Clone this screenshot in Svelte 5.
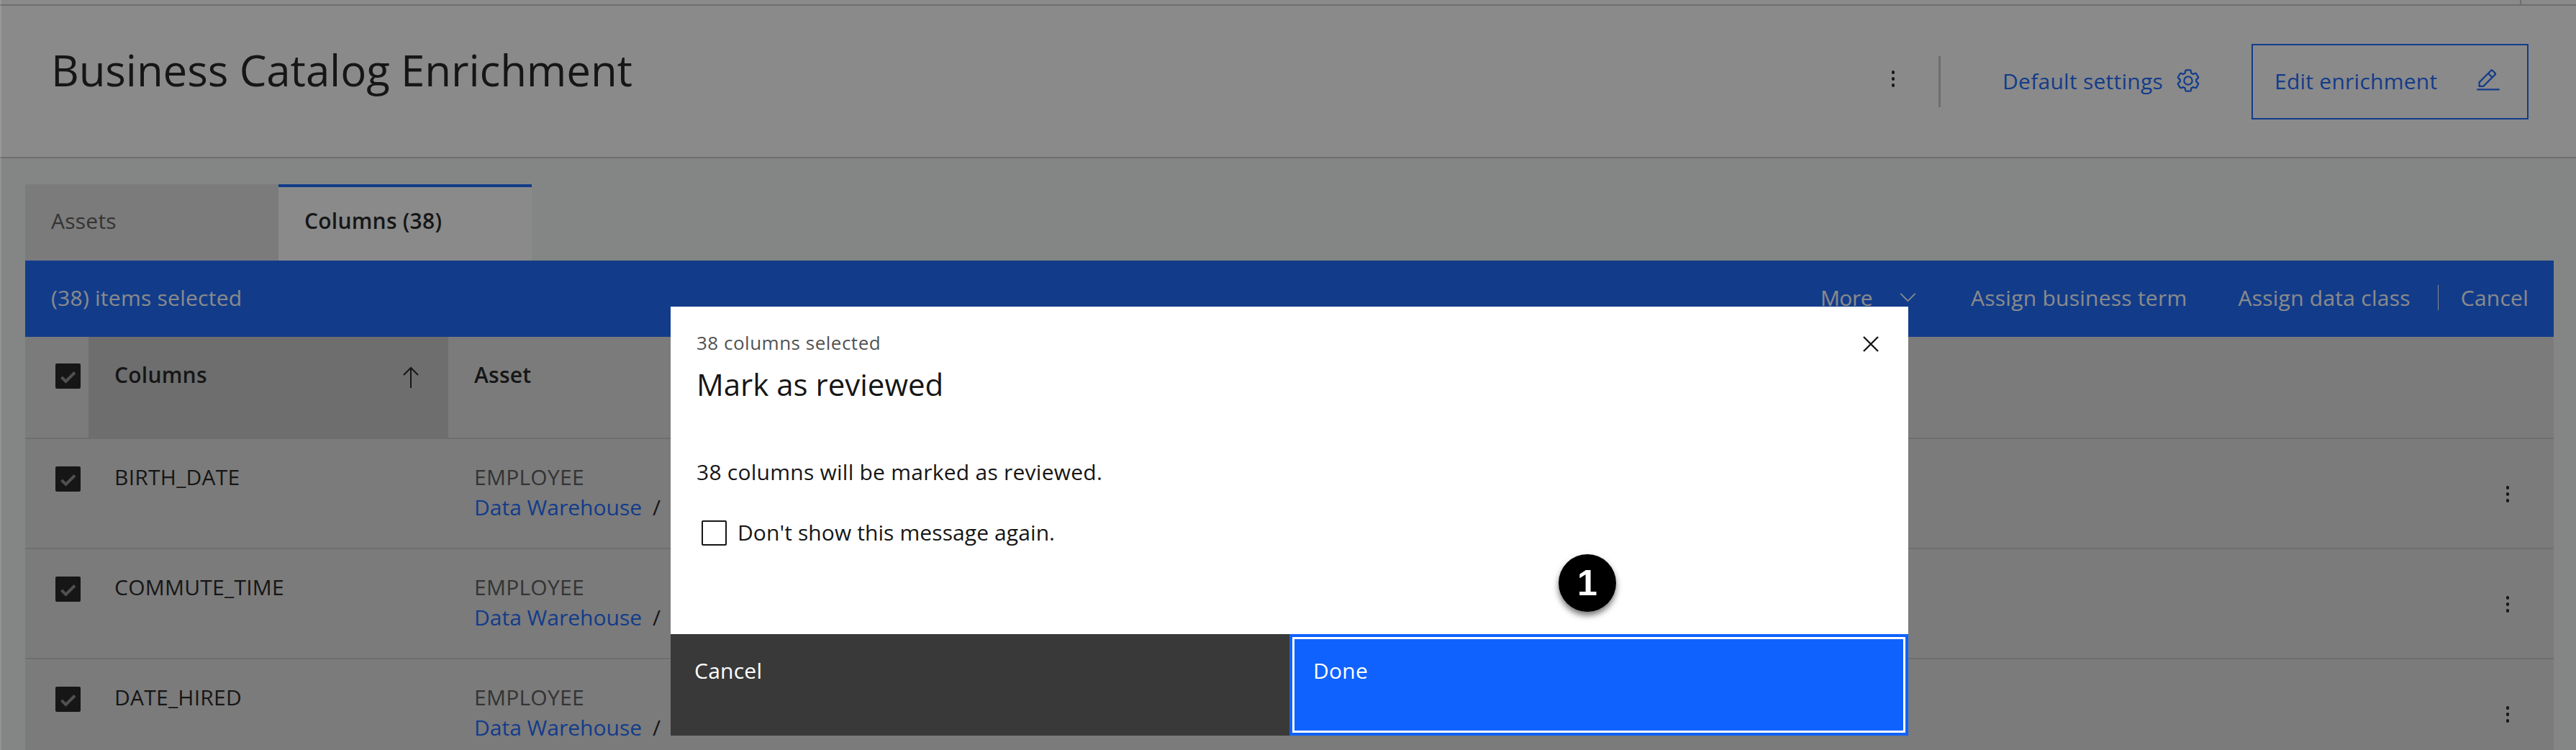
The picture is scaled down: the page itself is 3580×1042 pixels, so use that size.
<script>
	const rows = ['BIRTH_DATE', 'COMMUTE_TIME', 'DATE_HIRED'];
</script>

{#snippet check()}
	<span class="check">
		<svg viewBox="0 0 35 35" width="35" height="35"><path d="M8.500 19l6 6L27 12.500" fill="none" stroke="#8a8a8a" stroke-width="4" /></svg>
	</span>
{/snippet}

{#snippet kebab()}
	<span class="kebab"><i></i><i></i><i></i></span>
{/snippet}

<div class="page">
	<div class="topstrip"><span class="tick"></span></div>

	<header class="pagehead">
		<h1>Business Catalog Enrichment</h1>
		<div class="headactions">
			{@render kebab()}
			<span class="vline"></span>
			<span class="settings">
				Default settings
				<svg viewBox="0 0 32 32" width="36" height="36" fill="#0f62fe">
					<path d="M27 16.760V16v-.770l1.920-1.680A2 2 0 0 0 29.300 11l-2.360-4a2 2 0 0 0-1.730-1 2 2 0 0 0-.640.100l-2.430.820a11.350 11.350 0 0 0-1.310-.750l-.510-2.520a2 2 0 0 0-2-1.610h-4.680a2 2 0 0 0-2 1.610l-.510 2.520a11.480 11.480 0 0 0-1.320.750L7.430 6.060A2 2 0 0 0 6.790 6a2 2 0 0 0-1.730 1L2.700 11a2 2 0 0 0 .410 2.510L5 15.240v1.530l-1.890 1.680A2 2 0 0 0 2.700 21l2.360 4a2 2 0 0 0 1.730 1 2 2 0 0 0 .640-.100l2.430-.820a11.350 11.350 0 0 0 1.310.750l.510 2.520a2 2 0 0 0 2 1.610h4.720a2 2 0 0 0 2-1.610l.510-2.520a11.480 11.480 0 0 0 1.320-.750l2.420.820a2 2 0 0 0 .640.100 2 2 0 0 0 1.730-1l2.280-4a2 2 0 0 0-.410-2.510ZM25.210 24l-3.430-1.160a8.860 8.860 0 0 1-2.710 1.570L18.360 28h-4.720l-.710-3.550a9.360 9.360 0 0 1-2.700-1.570L6.790 24l-2.360-4 2.720-2.400a8.900 8.900 0 0 1 0-3.130L4.430 12l2.360-4 3.430 1.160a8.860 8.860 0 0 1 2.710-1.570L13.640 4h4.720l.710 3.550a9.360 9.360 0 0 1 2.700 1.570L25.210 8l2.360 4-2.720 2.400a8.900 8.900 0 0 1 0 3.130L27.570 20Z" />
					<path d="M16 22a6 6 0 1 1 6-6 5.940 5.940 0 0 1-6 6Zm0-10a3.910 3.910 0 0 0-4 4 3.910 3.910 0 0 0 4 4 3.910 3.910 0 0 0 4-4 3.910 3.910 0 0 0-4-4Z" />
				</svg>
			</span>
			<button class="editbtn">
				Edit enrichment
				<svg viewBox="0 0 32 32" width="36" height="36" fill="#0f62fe">
					<path d="M2 26h28v2H2z" />
					<path d="M25.400 9c.800-.800.800-2 0-2.800l-3.600-3.600c-.800-.800-2-.800-2.800 0l-15 15V24h6.400l15-15zm-5-5L24 7.600l-3 3L17.400 7l3-3zM6 22v-3.600l10-10 3.600 3.600-10 10H6z" />
				</svg>
			</button>
		</div>
	</header>

	<section class="content">
		<div class="tabs">
			<div class="tab">Assets</div>
			<div class="tab active">Columns (38)</div>
		</div>

		<div class="batchbar">
			<span class="selected">(38) items selected</span>
			<div class="batchactions">
				<span class="more">
					More
					<svg viewBox="0 0 24 13" width="23" height="12"><path d="M1 1l11 11L23 1" fill="none" stroke="#fff" stroke-width="2" /></svg>
				</span>
				<span class="assign1">Assign business term</span>
				<span class="assign2">Assign data class</span>
				<span class="barsep"></span>
				<span>Cancel</span>
			</div>
		</div>

		<div class="table">
			<div class="row headrow">
				<div class="cell-check">{@render check()}</div>
				<div class="cell-name sorted">
					<b>Columns</b>
					<svg viewBox="0 0 24 30" width="24" height="30"><path d="M12 30V2M2 12L12 2l10 10" fill="none" stroke="#161616" stroke-width="2" /></svg>
				</div>
				<div class="cell-asset"><b>Asset</b></div>
			</div>
			{#each rows as name (name)}
				<div class="row">
					<div class="cell-check">{@render check()}</div>
					<div class="cell-name">{name}</div>
					<div class="cell-asset">
						<div class="assetname">EMPLOYEE</div>
						<div class="assetpath"><span class="link">Data Warehouse</span><span class="slash">/</span></div>
					</div>
					<div class="cell-menu">{@render kebab()}</div>
				</div>
			{/each}
		</div>
	</section>

	<div class="scrim"></div>

	<div class="modal">
		<div class="modalbody">
			<div class="modalhead">
				<div class="modallabel">38 columns selected</div>
				<h2>Mark as reviewed</h2>
				<svg class="close" viewBox="0 0 22 22" width="22" height="22"><path d="M1 1l20 20M21 1L1 21" fill="none" stroke="#161616" stroke-width="2.400" /></svg>
			</div>
			<p>38 columns will be marked as reviewed.</p>
			<label class="dontshow"><span class="emptybox"></span>Don't show this message again.</label>
		</div>
		<div class="modalfoot">
			<div class="footbtn secondary">Cancel</div>
			<div class="footbtn primary">Done</div>
		</div>
		<div class="badge">1</div>
	</div>
</div>

<style>
	:global(body) {
		margin: 0;
		background: #f3f6f5;
	}

	.page {
		position: relative;
		height: 1042px;
		overflow: hidden;
		font-family: 'Open Sans', 'Noto Sans', sans-serif;
		font-size: 30px;
		letter-spacing: 0.25px;
		color: #161616;
		background: #f3f6f5;
	}

	.topstrip {
		display: flex;
		justify-content: flex-end;
		height: 6px;
		padding-right: 76px;
		background: #fff;
		border-bottom: 2px solid #c6c6c6;
	}

	.tick {
		width: 2px;
		background: #c6c6c6;
	}

	.pagehead {
		display: flex;
		justify-content: space-between;
		height: 210px;
		padding: 0 66px 0 71px;
		background: #fff;
		border-bottom: 2px solid #c6c6c6;
	}

	h1 {
		margin: 53px 0 0;
		font-size: 60px;
		line-height: 72px;
		font-weight: 400;
		letter-spacing: -0.1px;
	}

	.headactions {
		display: flex;
		align-items: flex-start;
		padding-top: 53px;
		color: #0f62fe;
	}

	.kebab {
		display: flex;
		flex-direction: column;
		align-items: center;
		gap: 4.500px;
		width: 4.500px;
	}

	.kebab i {
		width: 4.500px;
		height: 4.500px;
		border-radius: 50%;
		background: #161616;
	}

	.headactions > .kebab {
		margin-top: 37px;
	}

	.vline {
		width: 3px;
		height: 71px;
		margin: 17px 86px 0 61px;
		background: #c6c6c6;
	}

	.settings {
		display: flex;
		align-items: center;
		gap: 17px;
		height: 102px;
		margin-right: 70px;
	}

	.editbtn {
		display: flex;
		align-items: center;
		justify-content: space-between;
		box-sizing: border-box;
		width: 385px;
		height: 105px;
		padding: 0 36px 3px 30px;
		border: 2px solid #0f62fe;
		background: none;
		color: inherit;
		font: inherit;
		letter-spacing: inherit;
	}

	.content {
		padding: 36px 31px 0 35px;
	}

	.tabs {
		display: flex;
	}

	.tab {
		box-sizing: border-box;
		width: 352px;
		height: 106px;
		padding: 26px 0 0 36px;
		background: #e0e0e0;
		color: #525252;
		border-top: 4px solid transparent;
	}

	.tab.active {
		background: #fff;
		color: #161616;
		font-weight: 600;
		border-top-color: #0f62fe;
	}

	.batchbar {
		display: flex;
		align-items: center;
		justify-content: space-between;
		box-sizing: border-box;
		height: 106px;
		padding: 0 35px 4px 36px;
		background: #0f62fe;
		color: #fff;
	}

	.batchactions {
		display: flex;
		align-items: center;
	}

	.more {
		display: flex;
		align-items: center;
		gap: 38px;
		letter-spacing: -0.5px;
	}

	.assign1 {
		margin-left: 76px;
	}

	.assign2 {
		margin-left: 71px;
	}

	.barsep {
		width: 1px;
		height: 35px;
		margin: 0 31px 0 38px;
		background: #fff;
	}

	.table {
		background: #e0e0e0;
	}

	.row {
		position: relative;
		display: grid;
		grid-template-columns: 88px 500px 1fr;
		box-sizing: border-box;
		height: 153px;
		border-bottom: 2px solid #c6c6c6;
	}

	.headrow {
		height: 142px;
	}

	.cell-check {
		padding: 38px 0 0 42px;
	}

	.headrow .cell-check {
		padding-top: 37px;
	}

	.check {
		display: block;
		width: 35px;
		height: 35px;
		border-radius: 2px;
		background: #161616;
	}

	.check svg {
		display: block;
	}

	.cell-name {
		padding: 32px 36px 0;
		line-height: 42px;
	}

	.headrow .cell-name {
		display: flex;
		justify-content: space-between;
		padding-top: 32px;
	}

	.sorted svg {
		margin: 9px 4px 0 0;
	}

	.sorted {
		background: #c6c6c6;
	}

	.cell-asset {
		padding: 32px 36px 0;
		line-height: 42px;
	}

	b {
		font-weight: 600;
	}

	.assetname {
		color: #525252;
	}

	.link {
		color: #0f62fe;
		letter-spacing: 0;
	}

	.slash {
		margin-left: 15px;
	}

	.cell-menu {
		position: absolute;
		top: 65px;
		right: 62px;
	}

	.scrim {
		position: absolute;
		inset: 0;
		background: rgba(22, 22, 22, 0.5);
		box-shadow: inset 2px 0 0 rgba(255, 255, 255, 0.12);
	}

	.modal {
		position: absolute;
		top: 426px;
		left: 932px;
		display: flex;
		flex-direction: column;
		width: 1720px;
		height: 596px;
		background: #fff;
	}

	.modalbody {
		flex: 1;
		padding: 35px 36px 0;
	}

	.modalhead {
		position: relative;
	}

	.modallabel {
		font-size: 26px;
		line-height: 30px;
		letter-spacing: 0.5px;
		color: #525252;
	}

	h2 {
		margin: 17px 0 0;
		font-size: 42px;
		line-height: 52px;
		font-weight: 400;
		letter-spacing: 0;
	}

	.close {
		position: absolute;
		top: 6px;
		right: 5px;
	}

	p {
		margin: 75px 0 0;
		line-height: 42px;
	}

	.dontshow {
		display: flex;
		align-items: center;
		gap: 15px;
		margin: 42px 0 0 7px;
		line-height: 42px;
		letter-spacing: 0.1px;
	}

	.emptybox {
		box-sizing: border-box;
		width: 35px;
		height: 35px;
		border: 2px solid #161616;
		border-radius: 2px;
	}

	.modalfoot {
		display: grid;
		grid-template-columns: 860px 860px;
		height: 141px;
		color: #fff;
	}

	.footbtn {
		box-sizing: border-box;
		padding: 30px 33px;
		line-height: 42px;
	}

	.secondary {
		background: #393939;
	}

	.primary {
		background: #0f62fe;
		box-shadow: inset 0 0 0 4px #0f62fe, inset 0 0 0 7px #fff;
	}

	.badge {
		position: absolute;
		top: 344px;
		left: 1234px;
		width: 80px;
		height: 80px;
		border-radius: 50%;
		background: #000;
		box-shadow: 0 5px 8px rgba(0, 0, 0, 0.55);
		color: #fff;
		font-family: 'Liberation Sans', Arial, sans-serif;
		font-size: 50px;
		font-weight: 700;
		line-height: 80px;
		text-align: center;
	}
</style>
